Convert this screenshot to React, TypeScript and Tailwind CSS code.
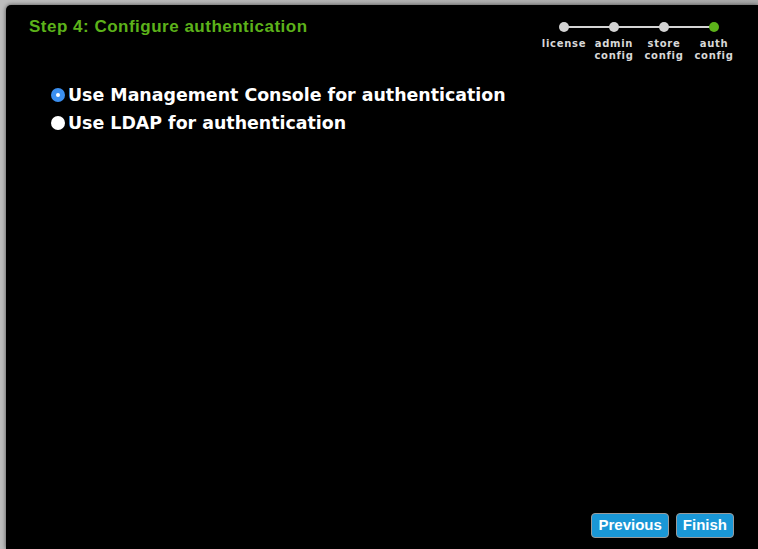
const steps = [
  { label: ["license"], done: true },
  { label: ["admin", "config"], done: true },
  { label: ["store", "config"], done: true },
  { label: ["auth", "config"], done: false, current: true },
];

function Stepper() {
  return (
    <div className="relative grid grid-cols-4 w-[200px]">
      <div className="absolute left-[25px] right-[25px] top-[4px] h-[2px] bg-[#d4d4d4]" />
      {steps.map((s, i) => (
        <div key={i} className="flex flex-col items-center">
          <div
            className={
              "relative h-[10px] w-[10px] rounded-full " +
              (s.current ? "bg-[#5cb21a]" : "bg-[#d4d4d4]")
            }
          />
          <div className="mt-[6px] flex flex-col items-center text-[10px] leading-[12px] font-bold text-[#d8d8d8] tracking-[0.7px] [font-family:'DejaVu_Sans',sans-serif]">
            {s.label.map((l) => (
              <span key={l}>{l}</span>
            ))}
          </div>
        </div>
      ))}
    </div>
  );
}

function Radio({ checked, label }: { checked?: boolean; label: string }) {
  return (
    <label className="flex items-center gap-[3px] h-[28px]">
      {checked ? (
        <span className="flex h-[14px] w-[14px] items-center justify-center rounded-full bg-[#3b8ff0]">
          <span className="h-[4px] w-[4px] rounded-full bg-white" />
        </span>
      ) : (
        <span className="h-[14px] w-[14px] rounded-full bg-white" />
      )}
      <span className="text-[17.4px] font-bold text-white [font-family:'DejaVu_Sans',sans-serif]">
        {label}
      </span>
    </label>
  );
}

function Button({ children }: { children: string }) {
  return (
    <button className="h-[25px] rounded-[4px] border border-[#9a9a9a] bg-[#1a97d6] px-[6px] text-[15px] font-bold text-white [font-family:'Liberation_Sans',sans-serif]">
      {children}
    </button>
  );
}

export default function App() {
  return (
    <div className="flex h-[549px] w-[758px] bg-gradient-to-r from-[#bdbdbd] to-[#a9a9a9] pl-[6px] pt-[5px]">
      <div className="flex flex-1 flex-col rounded-tl-[5px] bg-black shadow-[0_0_4px_rgba(0,0,0,0.6)]">
        <div className="flex h-[60px] items-start justify-between pl-[23px] pr-[19px] pt-[12px]">
          <h1 className="text-[17px] leading-[20px] font-bold tracking-[0.5px] text-[#5cb21a] [font-family:'Liberation_Sans',sans-serif]">
            Step 4: Configure authentication
          </h1>
          <div className="pt-[5px]">
            <Stepper />
          </div>
        </div>
        <div className="mt-[16px] flex flex-col pl-[45px]">
          <Radio checked label="Use Management Console for authentication" />
          <Radio label="Use LDAP for authentication" />
        </div>
        <div className="flex-1" />
        <div className="flex justify-end gap-[7px] pb-[11px] pr-[24px]">
          <Button>Previous</Button>
          <Button>Finish</Button>
        </div>
      </div>
    </div>
  );
}
